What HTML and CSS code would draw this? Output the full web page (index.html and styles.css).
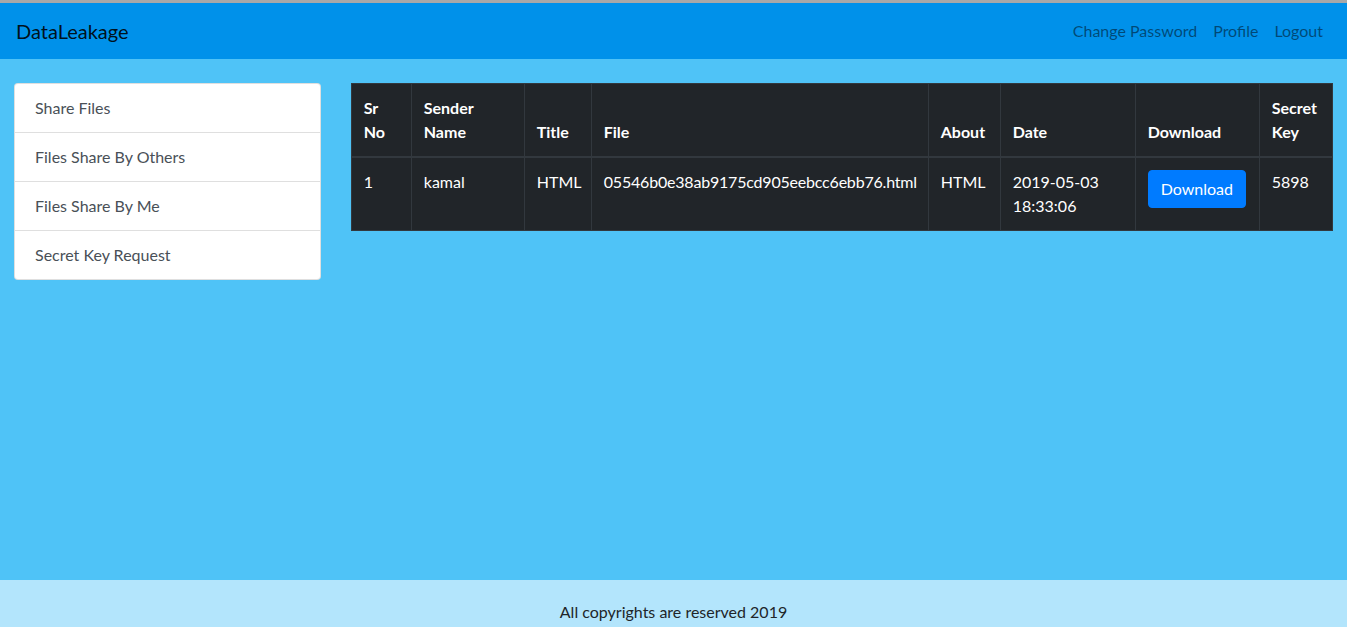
FILE: index.html
```html
<!DOCTYPE html>
<html lang="en">
<head>
<meta charset="utf-8">
<title>DataLeakage</title>
<link rel="stylesheet" href="styles.css">
</head>
<body>
<nav class="navbar">
  <a class="brand" href="#">DataLeakage</a>
  <ul class="nav-links">
    <li><a href="#">Change Password</a></li>
    <li><a href="#">Profile</a></li>
    <li><a href="#">Logout</a></li>
  </ul>
</nav>
<main class="main">
  <aside class="col-side">
    <div class="list-group">
      <a class="list-item" href="#">Share Files</a>
      <a class="list-item" href="#">Files Share By Others</a>
      <a class="list-item" href="#">Files Share By Me</a>
      <a class="list-item" href="#">Secret Key Request</a>
    </div>
  </aside>
  <section class="col-main">
    <table class="table">
      <thead>
        <tr>
          <th class="c-sr">Sr No</th>
          <th class="c-sender">Sender Name</th>
          <th class="c-title">Title</th>
          <th class="c-file">File</th>
          <th class="c-about">About</th>
          <th class="c-date">Date</th>
          <th class="c-dl">Download</th>
          <th class="c-key">Secret Key</th>
        </tr>
      </thead>
      <tbody>
        <tr>
          <td>1</td>
          <td>kamal</td>
          <td>HTML</td>
          <td class="filename">05546b0e38ab9175cd905eebcc6ebb76.html</td>
          <td>HTML</td>
          <td>2019-05-03 18:33:06</td>
          <td><a class="btn" href="#">Download</a></td>
          <td>5898</td>
        </tr>
      </tbody>
    </table>
  </section>
</main>
<footer class="footer">All copyrights are reserved 2019</footer>
</body>
</html>
```
FILE: styles.css
```css
* { box-sizing: border-box; }
html, body { margin: 0; padding: 0; }
body {
  font-family: "Lato", "Noto Sans", sans-serif;
  font-size: 16px;
  line-height: 1.5;
  color: #212529;
  background: #4fc3f7;
  border-top: 3px solid #a8a8a8;
}
a { text-decoration: none; }

.navbar {
  display: flex;
  align-items: center;
  justify-content: space-between;
  height: 56px;
  padding: 8px 16px;
  background: #0091ea;
}
.brand {
  font-size: 20px;
  line-height: 30px;
  color: rgba(0,0,0,.9);
}
.nav-links {
  display: flex;
  list-style: none;
  margin: 0;
  padding: 0;
}
.nav-links a {
  display: block;
  padding: 8px 8px;
  color: rgba(0,0,0,.5);
}

.main {
  display: flex;
  align-items: flex-start;
  min-height: 521px;
  padding-top: 24px;
}
.col-side {
  flex: 0 0 25%;
  padding: 0 16px 0 14px;
}
.col-main {
  flex: 0 0 75%;
  padding: 0 16px 0 14px;
}

.list-group {
  display: flex;
  flex-direction: column;
  background: #fff;
  border: 1px solid rgba(0,0,0,.125);
  border-radius: 4px;
}
.list-item {
  display: block;
  padding: 12px 20px;
  color: #495057;
  border-top: 1px solid rgba(0,0,0,.125);
  line-height: 24px;
}
.list-item:first-child { border-top: 0; }

.table {
  width: 100%;
  table-layout: fixed;
  border-collapse: collapse;
  background: #212529;
  color: #fff;
  border: 1px solid #32383e;
}
.table th, .table td {
  padding: 12px;
  border: 1px solid #32383e;
  text-align: left;
  vertical-align: top;
}
.table th {
  vertical-align: bottom;
  font-weight: 700;
  border-bottom: 2px solid #32383e;
}
.table .filename { letter-spacing: -0.2px; }
.c-sr { width: 60px; }
.c-sender { width: 113px; }
.c-title { width: 67px; }
.c-file { width: 337px; }
.c-about { width: 72px; }
.c-date { width: 135px; }
.c-dl { width: 124px; }
.c-key { width: 73px; }

.btn {
  display: inline-block;
  padding: 6px 12px;
  line-height: 24px;
  color: #fff;
  background: #007bff;
  border: 1px solid #007bff;
  border-radius: 4px;
}

.footer {
  background: #b3e5fc;
  text-align: center;
  padding: 20px 0 10px;
}
```
